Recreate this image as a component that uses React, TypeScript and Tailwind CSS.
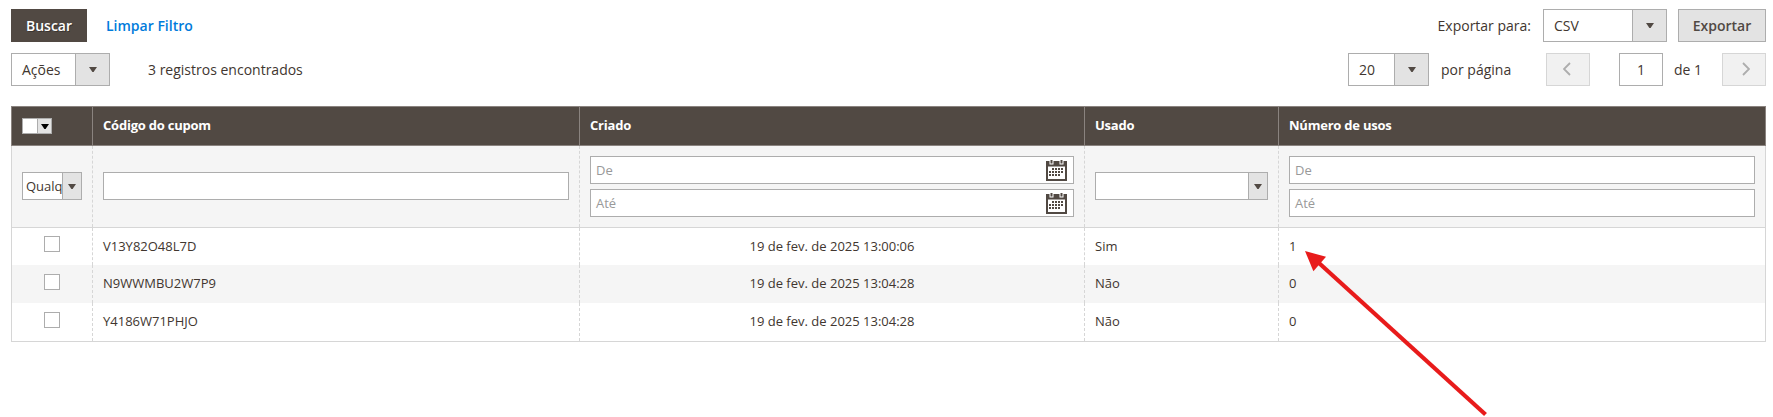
import React from "react";

const GRID = "grid grid-cols-[81px_487px_505px_194px_488px]";

const coupons = [
  { code: "V13Y82O48L7D", created: "19 de fev. de 2025 13:00:06", used: "Sim", uses: 1 },
  { code: "N9WWMBU2W7P9", created: "19 de fev. de 2025 13:04:28", used: "Não", uses: 0 },
  { code: "Y4186W71PHJO", created: "19 de fev. de 2025 13:04:28", used: "Não", uses: 0 },
];

function Caret({ color = "#514943" }: { color?: string }) {
  return (
    <svg width="8" height="5" viewBox="0 0 8 5" className="shrink-0">
      <path d="M0 0h8L4.6 5H3.4z" fill={color} />
    </svg>
  );
}

function Select({ label, className, arrow }: { label: string; className: string; arrow: string }) {
  return (
    <div className={`flex shrink-0 border border-[#adadad] bg-white ${className}`}>
      <span className="min-w-0 flex-1 self-center whitespace-nowrap">{label}</span>
      <span className={`flex shrink-0 items-center justify-center border-l border-[#adadad] bg-[#e3e3e3] ${arrow}`}>
        <Caret />
      </span>
    </div>
  );
}

function CalendarIcon() {
  return (
    <svg width="21" height="21" viewBox="0 0 21 21" className="shrink-0">
      <path d="M0 1h21v20H0z M2 6.5v12.5h17V6.5z" fill="#514943" fillRule="evenodd" />
      <path d="M3.5 0h4v4.5h-4z M13.5 0h4v4.5h-4z" fill="#fff" />
      <path d="M4.5 0h2v3.5h-2z M14.5 0h2v3.5h-2z" fill="#514943" />
      <path
        d="M6 8h2v2H6z M9 8h2v2H9z M12 8h2v2h-2z M15 8h2v2h-2z M3 11h2v2H3z M6 11h2v2H6z M9 11h2v2H9z M12 11h2v2h-2z M15 11h2v2h-2z M3 14h2v2H3z M6 14h2v2H6z M9 14h2v2H9z M12 14h2v2h-2z"
        fill="#514943"
      />
    </svg>
  );
}

function Field({ placeholder, calendar }: { placeholder?: string; calendar?: boolean }) {
  return (
    <div className="flex h-7 items-center justify-between border border-[#adadad] bg-white pr-[6px] pl-[5px] text-[#999999]">
      <span>{placeholder}</span>
      {calendar && <CalendarIcon />}
    </div>
  );
}

function Pager({ next }: { next?: boolean }) {
  return (
    <button
      className={`flex h-[33px] w-11 shrink-0 items-center justify-center border border-[#d6d6d6] bg-[#f1f1f1] pb-0.5 ${next ? "pl-[3px]" : "pr-[3px]"}`}
    >
      <svg width="8" height="14" viewBox="0 0 8 14" fill="none" stroke="#adadad" strokeWidth="1.8">
        <path d={next ? "M1 1l6 6-6 6" : "M7 1L1 7l6 6"} />
      </svg>
    </button>
  );
}

const cell = "border-l border-dashed border-[#d6d6d6] px-[10px]";
const headCell = "flex items-center border-l border-[#8a837f] px-[10px]";

export default function App() {
  return (
    <div className="relative h-[417px] w-[1773px] overflow-hidden bg-white pt-[9px] pl-[11px] font-['Open_Sans',sans-serif] text-sm text-[#41362f]">
      <div className="flex h-[33px] w-[1755px] items-center justify-between">
        <div className="flex items-center">
          <button className="h-[33px] w-[76px] bg-[#514943] font-semibold text-white [text-shadow:1px_1px_0_rgba(0,0,0,0.3)]">Buscar</button>
          <a className="ml-[19px] font-semibold text-[#007bdb]">Limpar Filtro</a>
        </div>
        <div className="flex items-center">
          <span className="mr-3">Exportar para:</span>
          <Select label="CSV" className="h-[33px] w-[124px] pl-[10px]" arrow="w-[34px]" />
          <button className="ml-[11px] h-[33px] w-[88px] border border-[#adadad] bg-[#e3e3e3] font-semibold text-[#514943]">Exportar</button>
        </div>
      </div>

      <div className="mt-[11px] flex h-[33px] w-[1755px] items-center justify-between">
        <div className="flex items-center">
          <Select label="Ações" className="h-[33px] w-[99px] pl-[10px]" arrow="w-[34px]" />
          <span className="ml-[38px]">3 registros encontrados</span>
        </div>
        <div className="flex items-center">
          <Select label="20" className="h-[33px] w-[81px] pl-[10px]" arrow="w-[34px]" />
          <span className="ml-3 w-[105px]">por página</span>
          <Pager />
          <div className="ml-[29px] flex h-[33px] w-11 items-center justify-center border border-[#adadad]">1</div>
          <span className="ml-[11px] w-12">de 1</span>
          <Pager next />
        </div>
      </div>

      <div className="mt-5 w-[1755px] text-[13px]">
        <div className={`${GRID} h-10 border-y border-r border-[#8a837f] bg-[#514943] font-bold tracking-[-0.22px] text-white`}>
          <div className={headCell}>
            <div className="flex h-4 w-[30px] border border-[#adadad] bg-white">
              <span className="flex-1" />
              <span className="flex w-[14px] items-center justify-center border-l border-[#adadad] bg-[#e3e3e3]">
                <Caret color="#000" />
              </span>
            </div>
          </div>
          <div className={`${headCell} pb-px`}>Código do cupom</div>
          <div className={`${headCell} pb-px`}>Criado</div>
          <div className={`${headCell} pb-px`}>Usado</div>
          <div className={`${headCell} pb-px`}>Número de usos</div>
        </div>

        <div className={`${GRID} h-[82px] border-b border-[#d6d6d6] bg-[#f5f5f5]`}>
          <div className="flex items-start border-l border-[#d6d6d6] pt-[26px] pl-[10px]">
            <Select label="Qualq" className="h-7 w-[60px] pl-[3px]" arrow="w-[19px]" />
          </div>
          <div className={`${cell} pt-[26px]`}><Field /></div>
          <div className={`${cell} flex flex-col gap-[5px] pt-[10px]`}>
            <Field placeholder="De" calendar />
            <Field placeholder="Até" calendar />
          </div>
          <div className={`${cell} flex items-start pt-[26px]`}>
            <Select label="" className="h-7 w-[173px]" arrow="w-[19px]" />
          </div>
          <div className="flex flex-col gap-[5px] border-x border-[#d6d6d6] px-[10px] pt-[10px] [border-left-style:dashed]">
            <Field placeholder="De" />
            <Field placeholder="Até" />
          </div>
        </div>

        {coupons.map((c, i) => (
          <div
            key={c.code}
            className={`${GRID} leading-[18px] ${i === 0 ? "h-[37px]" : i === 1 ? "h-[38px] bg-[#f5f5f5]" : "h-[39px] border-b border-[#d6d6d6]"}`}
          >
            <div className={`flex justify-center border-l border-[#d6d6d6] ${i === 0 ? "pt-2" : "pt-[9px]"}`}>
              <span className="h-4 w-4 border border-[#adadad] bg-white" />
            </div>
            <div className={`${cell} pt-[9px]`}>{c.code}</div>
            <div className={`${cell} pt-[9px] text-center`}>{c.created}</div>
            <div className={`${cell} pt-[9px]`}>{c.used}</div>
            <div className="border-x border-[#d6d6d6] px-[10px] pt-[9px] [border-left-style:dashed]">{c.uses}</div>
          </div>
        ))}
      </div>

      <svg className="absolute top-[245px] left-[1295px]" width="200" height="172" viewBox="1295 245 200 172">
        <path d="M1314 258.5L1485.5 414.5" stroke="#e81b1b" strokeWidth="4.2" />
        <path d="M1305 251l21 5.8-12.6 14.5z" fill="#e81b1b" />
      </svg>
    </div>
  );
}
